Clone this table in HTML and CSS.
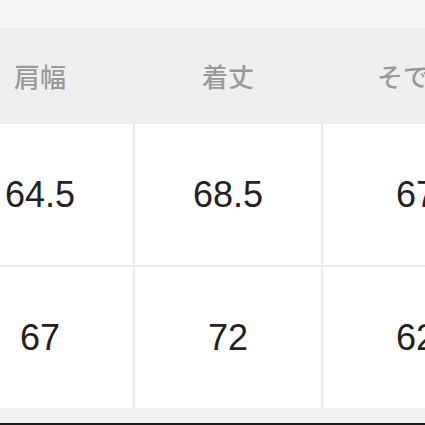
FILE: index.html
```html
<!DOCTYPE html>
<html lang="ja">
<head>
<meta charset="utf-8">
<link rel="stylesheet" href="styles.css">
</head>
<body>
<div class="page">
  <div class="topband"></div>
  <div class="table">
    <div class="cell head">肩幅</div>
    <div class="cell head">着丈</div>
    <div class="cell head">そで丈</div>
    <div class="cell">64.5</div>
    <div class="cell">68.5</div>
    <div class="cell">67</div>
    <div class="cell">67</div>
    <div class="cell">72</div>
    <div class="cell">62</div>
  </div>
  <div class="bottomband"></div>
  <div class="edge"></div>
</div>
</body>
</html>
```
FILE: styles.css
```css
html, body {
  margin: 0;
  padding: 0;
  background: #ffffff;
}
.page {
  width: 425px;
  height: 425px;
  overflow: hidden;
  display: flex;
  flex-direction: column;
}
.topband {
  height: 28px;
  flex: none;
  background: #f7f7f7;
}
.table {
  flex: none;
  margin-left: -53px;
  width: 562px;
  display: grid;
  grid-template-columns: 186px 186px 186px;
  grid-template-rows: 94px 141px 141px;
  column-gap: 2px;
  row-gap: 2px;
  background: #ededed;
}
.cell {
  background: #ffffff;
  display: flex;
  align-items: center;
  justify-content: center;
  font-family: "Liberation Sans", Arial, sans-serif;
  font-size: 36px;
  color: #222222;
}
.cell.head {
  background: #efefef;
  font-family: "Noto Sans CJK JP", "Noto Sans", sans-serif;
  font-size: 26px;
  font-weight: 500;
  color: #9a9a9a;
}
.bottomband {
  flex: 1;
  background: #f2f2f2;
}
.edge {
  height: 2px;
  flex: none;
  background: #1c1c1c;
}
```
